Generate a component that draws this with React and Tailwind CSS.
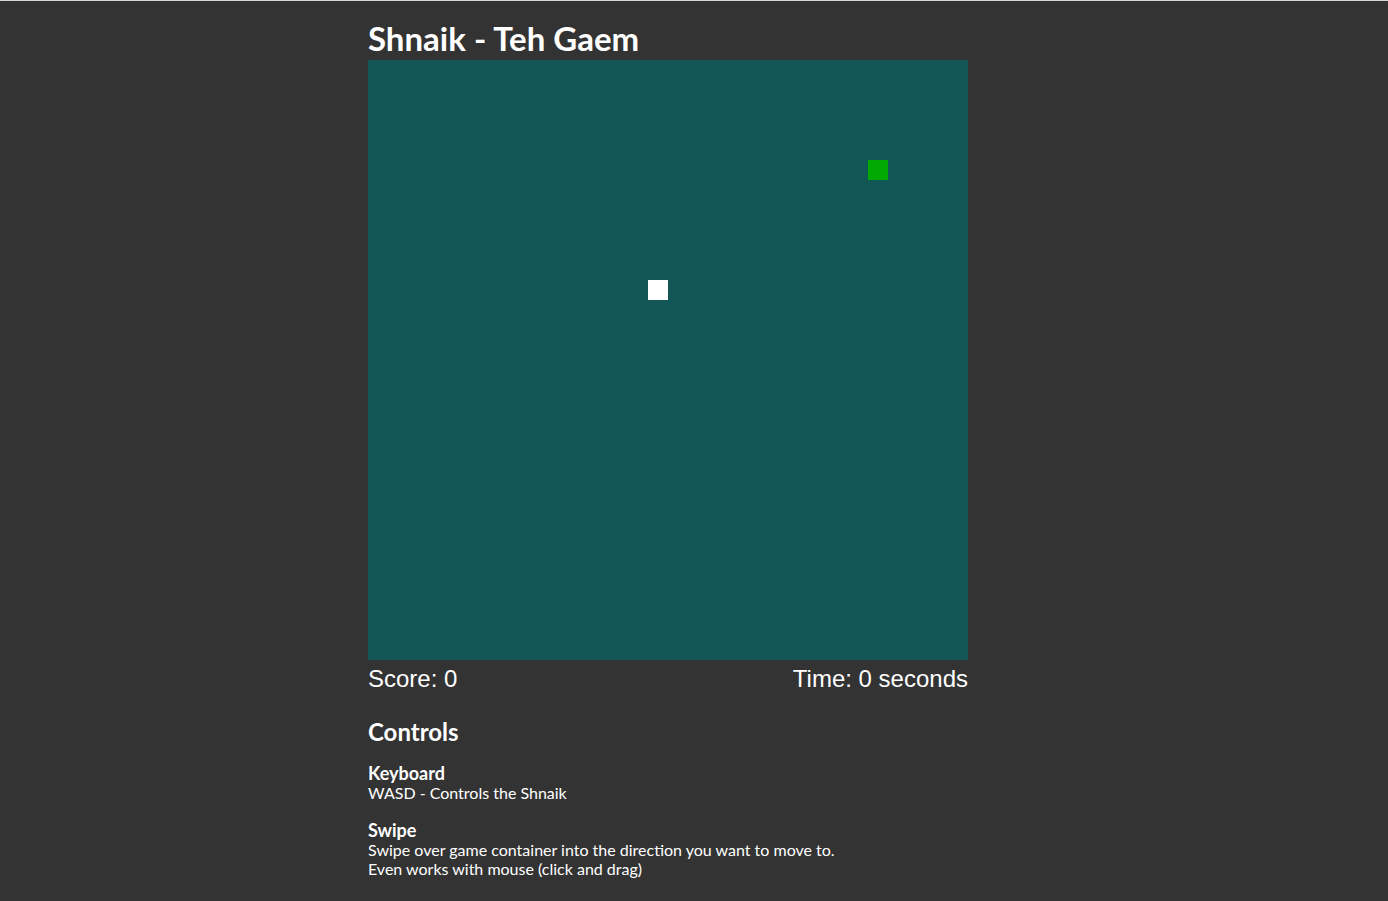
import React from 'react'

const CELL = 20

function Cell({ x, y, className }) {
  return (
    <div
      className={`absolute w-[20px] h-[20px] ${className}`}
      style={{ left: x * CELL, top: y * CELL }}
    />
  )
}

export default function App() {
  return (
    <div className="min-h-[901px] bg-[#333333] border-t border-[#d6d6d6] text-white font-['Lato','Noto_Sans',sans-serif]">
      <div className="w-[652px] mx-auto">
        <h1 className="text-[33px] font-bold leading-[38px] pt-[18px] pb-[3px]">Shnaik - Teh Gaem</h1>

        {/* game board */}
        <div className="relative w-[600px] h-[600px] bg-[#125655]">
          <Cell x={25} y={5} className="bg-[#00aa00]" />
          <Cell x={14} y={11} className="bg-white" />
        </div>

        <div className="w-[600px] flex justify-between font-['Liberation_Sans',sans-serif] text-[24px] leading-[28px] mt-[5px]">
          <span>Score: 0</span>
          <span>Time: 0 seconds</span>
        </div>

        <h2 className="text-[24px] font-bold leading-[30px] mt-[24px]">Controls</h2>

        <div className="mt-[16px]">
          <h3 className="text-[18px] font-bold leading-[20px]">Keyboard</h3>
          <p className="text-[16px] leading-[19px]">WASD - Controls the Shnaik</p>
        </div>

        <div className="mt-[18px]">
          <h3 className="text-[18px] font-bold leading-[20px]">Swipe</h3>
          <p className="text-[16px] leading-[19px]">
            Swipe over game container into the direction you want to move to.
            <br />
            Even works with mouse (click and drag)
          </p>
        </div>
      </div>
    </div>
  )
}
